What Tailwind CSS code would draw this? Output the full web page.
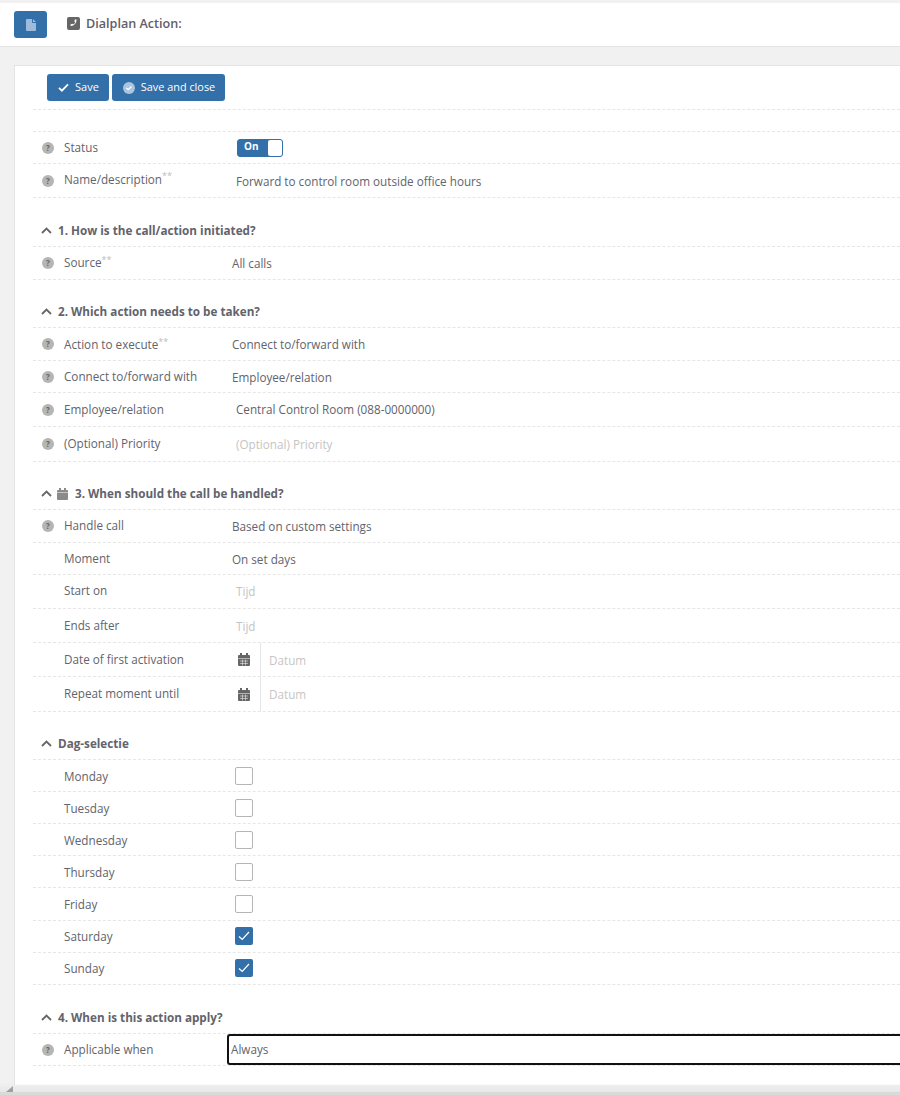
<!DOCTYPE html>
<html lang="en">
<head>
<meta charset="UTF-8" />
<title>Dialplan Action</title>
<script src="https://cdn.jsdelivr.net/npm/@tailwindcss/browser@4"></script>
</head>
<body class="h-[1095px] overflow-hidden bg-[#f1f1f1] font-['Open_Sans',sans-serif] text-[11.7px] text-[#62636c]">

<!-- top bar -->
<div class="mt-[3px] flex h-[44px] items-center border-b border-[#e4e4e4] bg-white pl-[14px]">
  <button class="flex h-[27px] w-[33px] items-center justify-center rounded-[3px] bg-[#336fa8]">
    <svg width="10" height="12" viewBox="0 0 10 12"><path d="M0 1a1 1 0 0 1 1-1h5v3a1 1 0 0 0 1 1h3v7a1 1 0 0 1-1 1H1a1 1 0 0 1-1-1zM7 0l3 3H7z" fill="#9dbcdb"/></svg>
  </button>
  <svg class="mb-[3px] ml-[20px]" width="13" height="13" viewBox="0 0 13 13"><rect width="13" height="13" rx="2" fill="#666"/><path d="M9.500 2.500l-1.700 0-.4 2 .8.7c-.4 1-1 1.700-1.900 2.200l-.8-.7-1.900.6 0 1.700c3.500.2 6-2.900 5.900-6.500z" fill="#fff"/></svg>
  <span class="ml-[6px] text-[12.6px] font-semibold text-[#5f6069]">Dialplan Action:</span>
</div>

<!-- card -->
<div class="mt-[18px] ml-[14px] h-[1020px] border-t border-l border-[#e4e4e4] bg-white pl-[18px]">
  <div class="flex h-[44px] items-start gap-[3px] border-b border-dashed border-[#e6e6e6] pt-[8px] pl-[14px]">
    <button class="flex h-[27px] w-[62px] items-center justify-center gap-[6px] rounded-[3px] bg-[#336fa8] text-[11px] text-white">
      <svg class="mb-[1px] ml-[1px]" width="11" height="9" viewBox="0 0 12 10"><path d="M1 5.500l3.200 3L11 1.500" fill="none" stroke="#fff" stroke-width="2"/></svg>Save
    </button>
    <button class="flex h-[27px] w-[113px] items-center justify-center gap-[6px] rounded-[3px] bg-[#336fa8] pl-[1px] text-[10.9px] text-white">
      <svg width="12" height="12" viewBox="0 0 12 12"><circle cx="6" cy="6" r="6" fill="#a9c5e0"/><path d="M3.500 6l1.800 1.700L8.500 4.500" fill="none" stroke="#fff" stroke-width="1.300"/></svg>Save and close
    </button>
  </div>
  <div class="h-[22px] border-b border-dashed border-[#e6e6e6]"></div>

  <div class="flex h-[32px] items-center border-b border-dashed border-[#e6e6e6]">
    <span class="ml-[9px] flex size-[12px] items-center justify-center rounded-full bg-[#b5b5b5] text-[8px] font-bold text-[#666]">?</span>
    <span class="ml-[10px] w-[173px]">Status</span>
    <div class="flex h-[18px] w-[46px] items-center rounded-[3px] border border-[#336fa8] bg-[#336fa8]">
      <span class="w-[30px] pb-[2px] pl-[6px] text-[10px] font-bold text-white">On</span>
      <span class="h-[16px] flex-1 rounded-[2px] bg-white"></span>
    </div>
  </div>
  <div class="flex h-[34px] items-center border-b border-dashed border-[#e6e6e6]">
    <span class="ml-[9px] flex size-[12px] items-center justify-center rounded-full bg-[#b5b5b5] text-[8px] font-bold text-[#666]">?</span>
    <span class="ml-[10px] w-[172px] pb-[2px]">Name/description<sup class="text-[9px] text-[#bbb]">**</sup></span>
    <span class="pt-[2px]">Forward to control room outside office hours</span>
  </div>

  <div class="flex h-[49px] items-end border-b border-dashed border-[#e6e6e6] pb-[6px] pl-[8px] font-bold">
    <svg class="mr-[6px] mb-[6px]" width="11" height="7" viewBox="0 0 11 7"><path d="M1 6l4.500-4.500L10 6" fill="none" stroke="#666" stroke-width="1.800"/></svg>1. How is the call/action initiated?
  </div>
  <div class="flex h-[33px] items-center border-b border-dashed border-[#e6e6e6]">
    <span class="ml-[9px] flex size-[12px] items-center justify-center rounded-full bg-[#b5b5b5] text-[8px] font-bold text-[#666]">?</span>
    <span class="ml-[10px] w-[168px]">Source<sup class="text-[9px] text-[#bbb]">**</sup></span>
    <span class="pt-[2px]">All calls</span>
  </div>

  <div class="flex h-[48px] items-end border-b border-dashed border-[#e6e6e6] pb-[6px] pl-[8px] font-bold">
    <svg class="mr-[6px] mb-[6px]" width="11" height="7" viewBox="0 0 11 7"><path d="M1 6l4.500-4.500L10 6" fill="none" stroke="#666" stroke-width="1.800"/></svg>2. Which action needs to be taken?
  </div>
  <div class="flex h-[33px] items-center border-b border-dashed border-[#e6e6e6]">
    <span class="ml-[9px] flex size-[12px] items-center justify-center rounded-full bg-[#b5b5b5] text-[8px] font-bold text-[#666]">?</span>
    <span class="ml-[10px] w-[168px] pt-[2px]">Action to execute<sup class="text-[9px] text-[#bbb]">**</sup></span>
    <span class="pt-[2px]">Connect to/forward with</span>
  </div>
  <div class="flex h-[32px] items-center border-b border-dashed border-[#e6e6e6]">
    <span class="ml-[9px] flex size-[12px] items-center justify-center rounded-full bg-[#b5b5b5] text-[8px] font-bold text-[#666]">?</span>
    <span class="ml-[10px] w-[168px]">Connect to/forward with</span>
    <span class="pt-[2px]">Employee/relation</span>
  </div>
  <div class="flex h-[34px] items-center border-b border-dashed border-[#e6e6e6]">
    <span class="ml-[9px] flex size-[12px] items-center justify-center rounded-full bg-[#b5b5b5] text-[8px] font-bold text-[#666]">?</span>
    <span class="ml-[10px] w-[172px]">Employee/relation</span>
    <span>Central Control Room (088-0000000)</span>
  </div>
  <div class="flex h-[35px] items-center border-b border-dashed border-[#e6e6e6]">
    <span class="ml-[9px] flex size-[12px] items-center justify-center rounded-full bg-[#b5b5b5] text-[8px] font-bold text-[#666]">?</span>
    <span class="ml-[10px] w-[172px]">(Optional) Priority</span>
    <span class="pt-[2px] text-[#c4c4c4]">(Optional) Priority</span>
  </div>

  <div class="flex h-[48px] items-end border-b border-dashed border-[#e6e6e6] pb-[6px] pl-[8px] font-bold">
    <svg class="mr-[5px] mb-[6px]" width="11" height="7" viewBox="0 0 11 7"><path d="M1 6l4.500-4.500L10 6" fill="none" stroke="#666" stroke-width="1.800"/></svg>
    <svg class="mr-[7px] mb-[3px]" width="11" height="12" viewBox="0 0 11 12"><path d="M0 3a1 1 0 0 1 1-1h1V0h2v2h3V0h2v2h1a1 1 0 0 1 1 1v1H0zM0 4.500h11v6.500a1 1 0 0 1-1 1H1a1 1 0 0 1-1-1z" fill="#8a8a8a"/></svg>3. When should the call be handled?
  </div>
  <div class="flex h-[33px] items-center border-b border-dashed border-[#e6e6e6]">
    <span class="ml-[9px] flex size-[12px] items-center justify-center rounded-full bg-[#b5b5b5] text-[8px] font-bold text-[#666]">?</span>
    <span class="ml-[10px] w-[168px]">Handle call</span>
    <span class="pt-[2px]">Based on custom settings</span>
  </div>
  <div class="flex h-[32px] items-center border-b border-dashed border-[#e6e6e6] pl-[31px]">
    <span class="w-[168px]">Moment</span>
    <span class="pt-[2px]">On set days</span>
  </div>
  <div class="flex h-[34px] items-center border-b border-dashed border-[#e6e6e6] pl-[31px]">
    <span class="w-[172px] pb-[2px]">Start on</span>
    <span class="text-[#c4c4c4]">Tijd</span>
  </div>
  <div class="flex h-[34px] items-center border-b border-dashed border-[#e6e6e6] pl-[31px]">
    <span class="w-[172px]">Ends after</span>
    <span class="pt-[2px] text-[#c4c4c4]">Tijd</span>
  </div>
  <div class="flex h-[34px] items-center border-b border-dashed border-[#e6e6e6] pl-[31px]">
    <span class="w-[174px]">Date of first activation</span>
    <svg width="12" height="13" viewBox="0 0 12 13"><path d="M0 3a1 1 0 0 1 1-1h1V0h2v2h4V0h2v2h1a1 1 0 0 1 1 1v2H0zM0 5.500h12V12a1 1 0 0 1-1 1H1a1 1 0 0 1-1-1z" fill="#666"/><path d="M2 8h8M2 10.500h8M4.500 6.500v6M7.500 6.500v6" stroke="#fff" stroke-width=".5"/></svg>
    <span class="ml-[10px] flex h-full items-center border-l border-[#e6e6e6] pt-[2px] pl-[8px] text-[#c9c5c5]">Datum</span>
  </div>
  <div class="flex h-[35px] items-center border-b border-dashed border-[#e6e6e6] pl-[31px]">
    <span class="w-[174px]">Repeat moment until</span>
    <svg width="12" height="13" viewBox="0 0 12 13"><path d="M0 3a1 1 0 0 1 1-1h1V0h2v2h4V0h2v2h1a1 1 0 0 1 1 1v2H0zM0 5.500h12V12a1 1 0 0 1-1 1H1a1 1 0 0 1-1-1z" fill="#666"/><path d="M2 8h8M2 10.500h8M4.500 6.500v6M7.500 6.500v6" stroke="#fff" stroke-width=".5"/></svg>
    <span class="ml-[10px] flex h-full items-center border-l border-[#e6e6e6] pt-[2px] pl-[8px] text-[#c9c5c5]">Datum</span>
  </div>

  <div class="flex h-[48px] items-end border-b border-dashed border-[#e6e6e6] pb-[6px] pl-[8px] font-bold">
    <svg class="mr-[6px] mb-[6px]" width="11" height="7" viewBox="0 0 11 7"><path d="M1 6l4.500-4.500L10 6" fill="none" stroke="#666" stroke-width="1.800"/></svg>Dag-selectie
  </div>
  <div class="flex h-[32px] items-center border-b border-dashed border-[#e6e6e6] pl-[31px]">
    <span class="w-[171px] pt-[2px]">Monday</span><span class="size-[18px] rounded-[2px] border border-[#b5b5b5]"></span>
  </div>
  <div class="flex h-[32px] items-center border-b border-dashed border-[#e6e6e6] pl-[31px]">
    <span class="w-[171px] pt-[2px]">Tuesday</span><span class="size-[18px] rounded-[2px] border border-[#b5b5b5]"></span>
  </div>
  <div class="flex h-[32px] items-center border-b border-dashed border-[#e6e6e6] pl-[31px]">
    <span class="w-[171px] pt-[2px]">Wednesday</span><span class="size-[18px] rounded-[2px] border border-[#b5b5b5]"></span>
  </div>
  <div class="flex h-[32px] items-center border-b border-dashed border-[#e6e6e6] pl-[31px]">
    <span class="w-[171px] pt-[2px]">Thursday</span><span class="size-[18px] rounded-[2px] border border-[#b5b5b5]"></span>
  </div>
  <div class="flex h-[33px] items-center border-b border-dashed border-[#e6e6e6] pl-[31px]">
    <span class="w-[171px] pt-[2px]">Friday</span><span class="size-[18px] rounded-[2px] border border-[#b5b5b5]"></span>
  </div>
  <div class="flex h-[32px] items-center border-b border-dashed border-[#e6e6e6] pl-[31px]">
    <span class="w-[171px]">Saturday</span>
    <span class="mb-[1px] flex size-[18px] items-center justify-center rounded-[2px] bg-[#336fa8]"><svg width="12" height="10" viewBox="0 0 12 10"><path d="M1 5.500l3.200 3L11 1" fill="none" stroke="#fff" stroke-width="1.200"/></svg></span>
  </div>
  <div class="flex h-[32px] items-center border-b border-dashed border-[#e6e6e6] pl-[31px]">
    <span class="w-[171px]">Sunday</span>
    <span class="mb-[1px] flex size-[18px] items-center justify-center rounded-[2px] bg-[#336fa8]"><svg width="12" height="10" viewBox="0 0 12 10"><path d="M1 5.500l3.200 3L11 1" fill="none" stroke="#fff" stroke-width="1.200"/></svg></span>
  </div>

  <div class="flex h-[49px] items-end border-b border-dashed border-[#e6e6e6] pb-[6px] pl-[8px] font-bold">
    <svg class="mr-[6px] mb-[6px]" width="11" height="7" viewBox="0 0 11 7"><path d="M1 6l4.500-4.500L10 6" fill="none" stroke="#666" stroke-width="1.800"/></svg>4. When is this action apply?
  </div>
  <div class="flex h-[32px] items-center border-b border-dashed border-[#e6e6e6]">
    <span class="ml-[9px] flex size-[12px] items-center justify-center rounded-full bg-[#b5b5b5] text-[8px] font-bold text-[#666]">?</span>
    <span class="ml-[10px] w-[163px]">Applicable when</span>
    <div class="flex h-[31px] flex-1 items-center rounded-l-[3px] border-2 border-r-0 border-[#111] pt-[1px] pl-[2px]">Always</div>
  </div>
</div>

<!-- bottom strip with resize grip -->
<div class="fixed right-0 bottom-0 left-0 h-[12px] bg-gradient-to-b from-white/0 to-[#e4e4e4]"></div>
<div class="fixed right-0 bottom-0 left-0 h-[3px] bg-[#dadada]"></div>
<svg class="fixed bottom-[3px] left-[6px]" width="7" height="6" viewBox="0 0 7 6"><path d="M7 0v6H0z" fill="#a0a0a0"/></svg>
</body>
</html>
